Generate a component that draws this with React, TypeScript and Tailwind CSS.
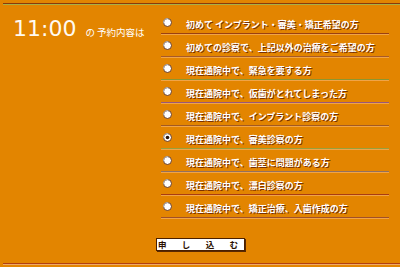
import React from 'react';

const options = [
    { label: '初めて インプラント・審美・矯正希望の方', line: '#9a4010' },
    { label: '初めての診察で、上記以外の治療をご希望の方', line: '#a65a2a' },
    { label: '現在通院中で、緊急を要する方', line: '#8c9630' },
    { label: '現在通院中で、仮歯がとれてしまった方', line: '#98587a' },
    { label: '現在通院中で、インプラント診察の方', line: '#a25a22' },
    { label: '現在通院中で、審美診察の方', line: '#98a03c' },
    { label: '現在通院中で、歯茎に問題がある方', line: '#927060' },
    { label: '現在通院中で、漂白診察の方', line: '#a83c12' },
    { label: '現在通院中で、矯正治療、入歯作成の方', line: '#a05028' },
];

const Radio: React.FC<{ checked?: boolean }> = ({ checked }) => (
    <svg width="9" height="9" viewBox="0 0 9 9" className="shrink-0">
        <circle cx="4.5" cy="4.5" r="4" fill="#ffffff" stroke="#6a3a20" strokeWidth="1" />
        <path d="M1.6 6.2 A3.2 3.2 0 0 1 6.2 1.6" fill="none" stroke="#b8b8b8" strokeWidth="1" />
        {checked && <circle cx="4.5" cy="4.5" r="1.8" fill="#2a1408" />}
    </svg>
);

export default function App() {
    return (
        <div className="w-[400px] h-[267px] bg-[#e38500] overflow-hidden flex flex-col font-['Noto_Sans_CJK_JP',sans-serif]">
            <div className="mt-[3px] ml-[3px]">
                <div className="h-px bg-[#8a3a0a]" />
                <div className="h-px bg-[#a8b048]" />
            </div>
            <div className="flex flex-1">
                <div className="w-[161px] shrink-0 pl-[13px] pt-[13px]">
                    <div className="flex items-baseline">
                        <span className="text-[22px] leading-none text-[#fffaf0] font-['DejaVu_Sans',sans-serif]">11:00</span>
                        <span className="ml-[9px] text-[9.5px] leading-none text-white">の&nbsp;予約内容は</span>
                    </div>
                </div>
                <div className="w-[228px] pt-[7px] flex flex-col">
                    {options.map((opt, i) => (
                        <div key={i}>
                            <div className="h-[21px] flex items-center">
                                <div className="ml-[2px]">
                                    <Radio checked={i === 5} />
                                </div>
                                <span className="ml-[14px] pt-[3px] text-[9px] leading-none font-bold text-white [text-shadow:1px_1px_0_#7a3000] whitespace-nowrap">
                                    {opt.label}
                                </span>
                            </div>
                            <div className="h-px" style={{ backgroundColor: opt.line }} />
                            <div className="h-px bg-[#f0a448]" />
                        </div>
                    ))}
                    <div className="mt-[19px] -ml-[5px] w-[89px] h-[13px] bg-white border border-[#4a2000] shadow-[1px_1px_0_#5a2800] flex items-center justify-between pl-[1px] pr-[6px] text-[8.5px] leading-none font-bold text-[#2a1000]">
                        <span>申</span>
                        <span>し</span>
                        <span>込</span>
                        <span>む</span>
                    </div>
                </div>
            </div>
            <div className="ml-[3px] mb-[2px]">
                <div className="h-px bg-[#b04010]" />
                <div className="h-px bg-[#f0a868]" />
            </div>
        </div>
    );
}
